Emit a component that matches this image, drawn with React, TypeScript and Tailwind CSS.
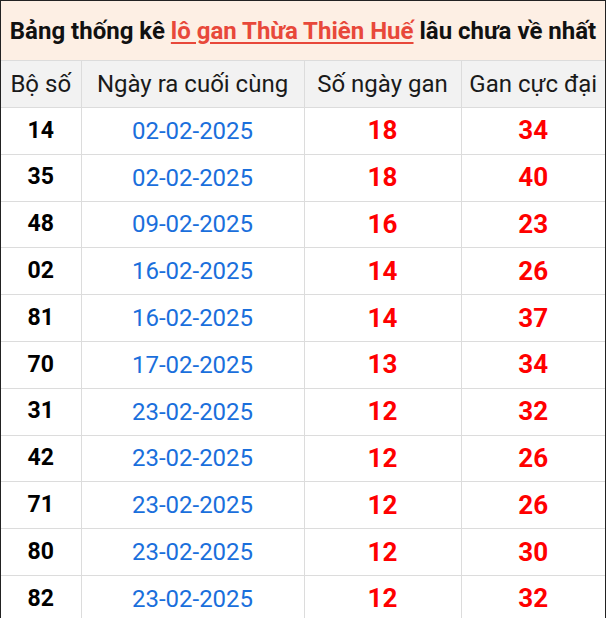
import React from "react";

type Row = { so: string; ngay: string; gan: number; max: number };

const rows: Row[] = [
	{ so: "14", ngay: "02-02-2025", gan: 18, max: 34 },
	{ so: "35", ngay: "02-02-2025", gan: 18, max: 40 },
	{ so: "48", ngay: "09-02-2025", gan: 16, max: 23 },
	{ so: "02", ngay: "16-02-2025", gan: 14, max: 26 },
	{ so: "81", ngay: "16-02-2025", gan: 14, max: 37 },
	{ so: "70", ngay: "17-02-2025", gan: 13, max: 34 },
	{ so: "31", ngay: "23-02-2025", gan: 12, max: 32 },
	{ so: "42", ngay: "23-02-2025", gan: 12, max: 26 },
	{ so: "71", ngay: "23-02-2025", gan: 12, max: 26 },
	{ so: "80", ngay: "23-02-2025", gan: 12, max: 30 },
	{ so: "82", ngay: "23-02-2025", gan: 12, max: 32 },
];

export default function App() {
	return (
		<div className="w-[606px] h-[618px] overflow-hidden bg-white font-['Roboto',_'Liberation_Sans',_sans-serif]">
			<div className="border border-[#222] border-b-0">
				{/* Title */}
				<div className="h-[59px] bg-[#fdefe4] flex items-center justify-center text-[24px] font-bold text-[#111] whitespace-nowrap">
					Bảng thống kê&nbsp;
					<a href="#" className="text-[#e8483a] underline underline-offset-[3px] decoration-[2px]">
						lô gan Thừa Thiên Huế
					</a>
					&nbsp;lâu chưa về nhất
				</div>

				<table className="w-full border-collapse table-fixed">
					<colgroup>
						<col className="w-[80px]" />
						<col className="w-[223px]" />
						<col className="w-[157px]" />
						<col />
					</colgroup>
					<thead>
						<tr className="h-[47px] bg-[#f2f2f2] text-[24px] text-[#1a1a1a]">
							<th className="font-normal border border-l-0 border-[#dcdcdc]">Bộ số</th>
							<th className="font-normal border border-[#dcdcdc]">Ngày ra cuối cùng</th>
							<th className="font-normal border border-[#dcdcdc]">Số ngày gan</th>
							<th className="font-normal border border-r-0 border-[#dcdcdc]">Gan cực đại</th>
						</tr>
					</thead>
					<tbody>
						{rows.map((r) => (
							<tr key={r.so} className="h-[46.8px] text-center">
								<td className="border border-l-0 border-[#dcdcdc] text-[23px] font-bold text-black">{r.so}</td>
								<td className="border border-[#dcdcdc] text-[24px] text-[#1a6fdc]">{r.ngay}</td>
								<td className="border border-[#dcdcdc] text-[26px] font-bold text-[#ff0000]">{r.gan}</td>
								<td className="border border-r-0 border-[#dcdcdc] text-[26px] font-bold text-[#ff0000]">{r.max}</td>
							</tr>
						))}
					</tbody>
				</table>
			</div>
		</div>
	);
}
